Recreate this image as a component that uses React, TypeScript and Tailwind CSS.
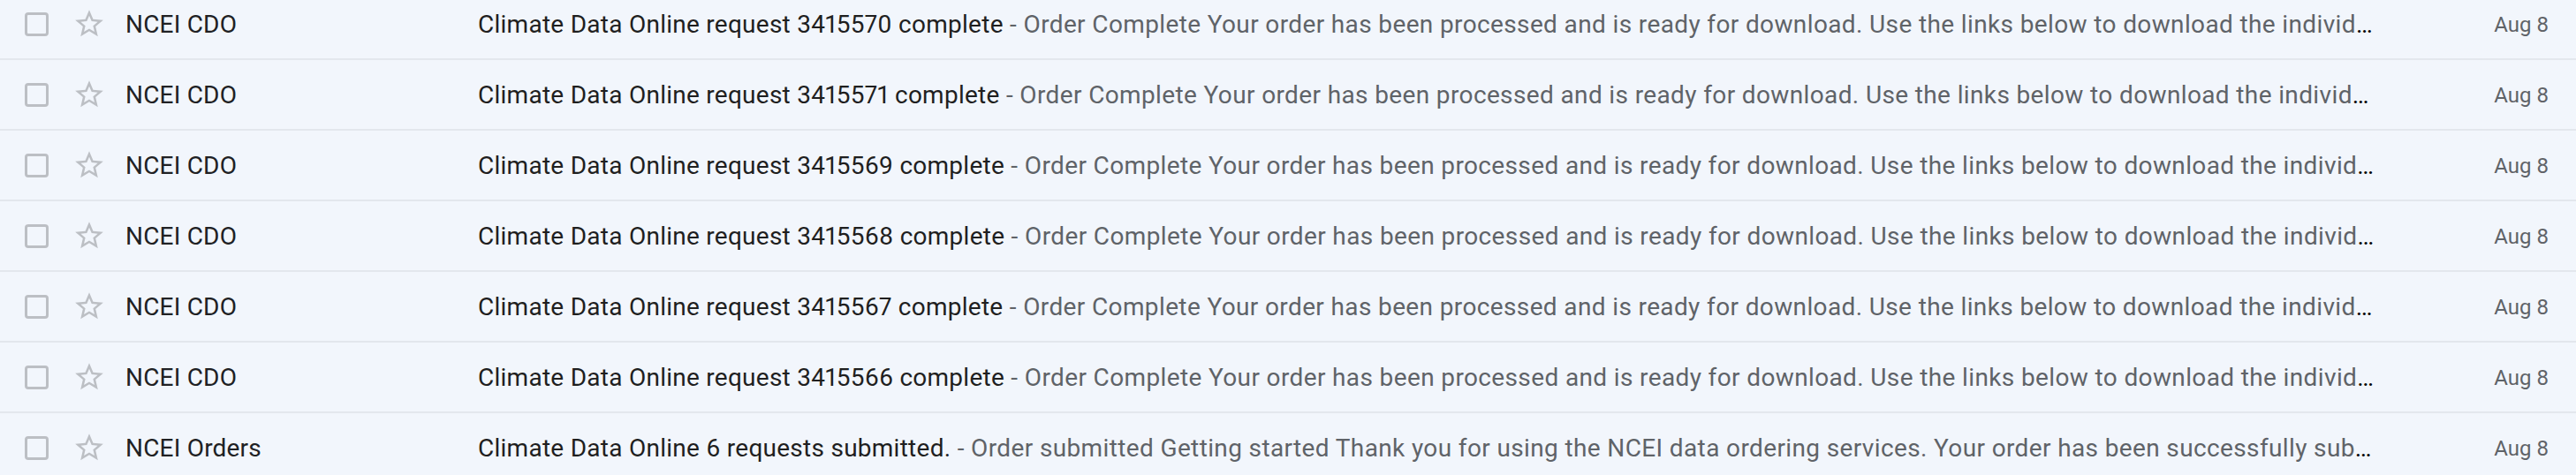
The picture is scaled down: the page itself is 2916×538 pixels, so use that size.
import React from "react";

type Row = { sender: string; subject: string; snippet: string; date: string };

const snippetCDO =
  "Order Complete Your order has been processed and is ready for download. Use the links below to download the individual files for your order. Thank you for using NCEI services.";

const rows: Row[] = [
  { sender: "NCEI CDO", subject: "Climate Data Online request 3415570 complete", snippet: snippetCDO, date: "Aug 8" },
  { sender: "NCEI CDO", subject: "Climate Data Online request 3415571 complete", snippet: snippetCDO, date: "Aug 8" },
  { sender: "NCEI CDO", subject: "Climate Data Online request 3415569 complete", snippet: snippetCDO, date: "Aug 8" },
  { sender: "NCEI CDO", subject: "Climate Data Online request 3415568 complete", snippet: snippetCDO, date: "Aug 8" },
  { sender: "NCEI CDO", subject: "Climate Data Online request 3415567 complete", snippet: snippetCDO, date: "Aug 8" },
  { sender: "NCEI CDO", subject: "Climate Data Online request 3415566 complete", snippet: snippetCDO, date: "Aug 8" },
  {
    sender: "NCEI Orders",
    subject: "Climate Data Online 6 requests submitted.",
    snippet:
      "Order submitted Getting started Thank you for using the NCEI data ordering services. Your order has been successfully submitted and will be processed shortly.",
    date: "Aug 8",
  },
];

function StarOutline() {
  return (
    <svg viewBox="0 0 24 24" className="w-[38px] h-[38px] shrink-0" fill="#bcbfc4">
      <path d="M22 9.24l-7.19-.62L12 2 9.19 8.63 2 9.24l5.46 4.73L5.82 21 12 17.27 18.18 21l-1.63-7.03L22 9.24zM12 15.4l-3.76 2.27 1-4.28-3.32-2.88 4.38-.38L12 6.1l1.71 4.04 4.38.38-3.32 2.88 1 4.28L12 15.4z" />
    </svg>
  );
}

export default function App() {
  return (
    <div
      className="w-[2916px] h-[538px] overflow-hidden bg-[#f2f6fc]"
      style={{ fontFamily: "Roboto, 'Liberation Sans', sans-serif" }}
    >
      <div className="-mt-[12px]">
        {rows.map((r, i) => (
          <div
            key={i}
            className="flex items-center h-[80px] border-b-2 border-[#e3e7ed] bg-[#f2f6fc]"
          >
            <div className="w-[28px] shrink-0" />
            <div className="w-[27px] h-[27px] shrink-0 rounded-[4px] border-[3px] border-[#bcbfc4]" />
            <div className="w-[27px] shrink-0" />
            <StarOutline />
            <div className="w-[22px] shrink-0" />
            <div className="w-[399px] shrink-0 mt-[2px] text-[28px] tracking-[0.2px] text-[#202124] whitespace-nowrap overflow-hidden">
              {r.sender}
            </div>
            <div className="flex-1 min-w-0 mt-[2px] text-[28px] proportional-nums whitespace-nowrap overflow-hidden text-ellipsis">
              <span className="text-[#1f1f1f] tracking-[0.26px]">{r.subject}</span>
              <span className="text-[#5f6368] tracking-[0.37px]"> - {r.snippet}</span>
            </div>
            <div className="w-[226px] shrink-0 mt-[2px] pr-[31px] text-right text-[24px] text-[#5f6368] whitespace-nowrap">
              {r.date}
            </div>
          </div>
        ))}
      </div>
    </div>
  );
}
